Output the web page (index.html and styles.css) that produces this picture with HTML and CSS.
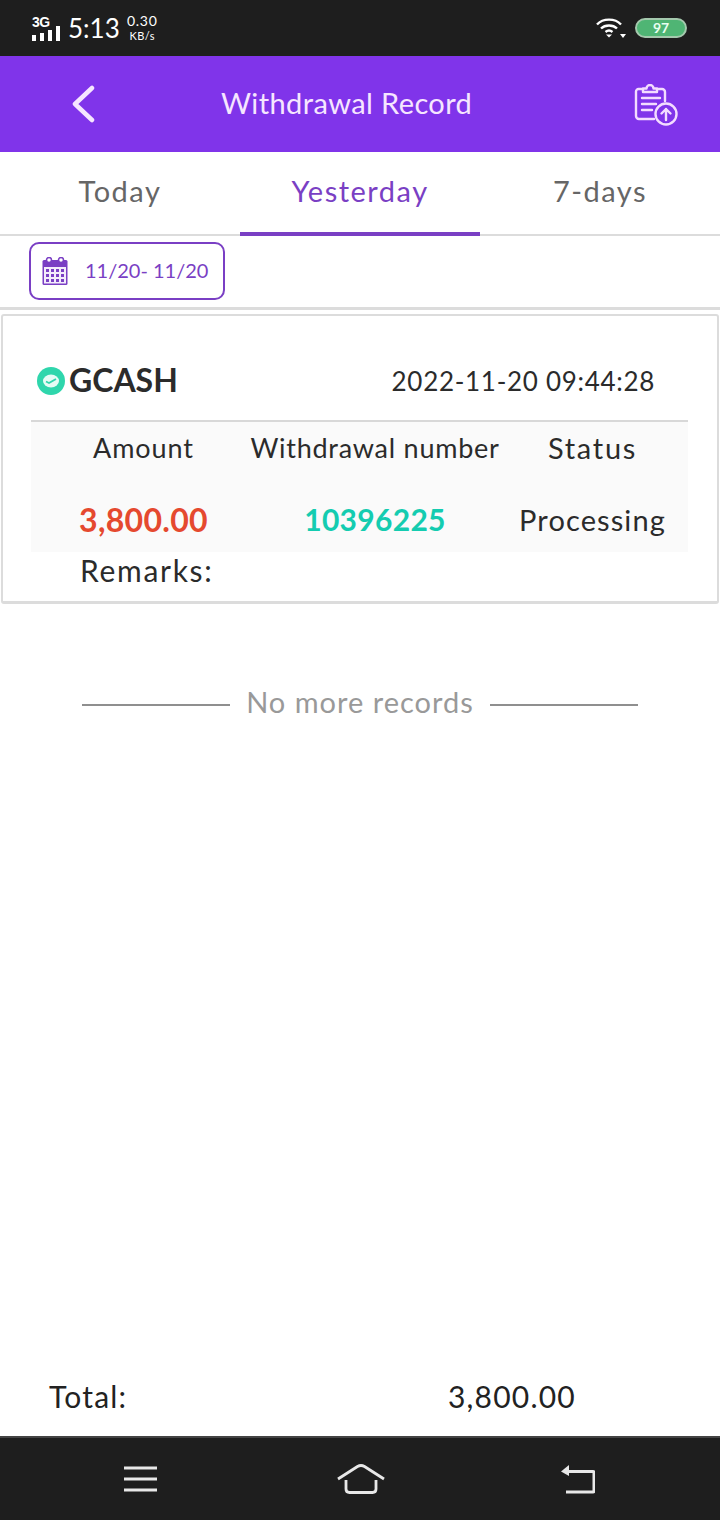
FILE: index.html
```html
<!DOCTYPE html>
<html>
<head>
    <meta charset="UTF-8">
    <meta name="viewport" content="width=device-width, initial-scale=1.0">
    <title>Withdrawal Record</title>
    <link rel="stylesheet" href="styles.css">
</head>
<body>
    <div class="page">
        <div class="status-bar">
            <div class="status-left">
                <div class="signal">
                    <span class="signal-label">3G</span>
                    <svg class="signal-bars" width="28" height="16" viewBox="0 0 28 16">
                        <rect x="0" y="10" width="4" height="6" fill="#fff"/>
                        <rect x="8" y="8" width="4" height="8" fill="#fff"/>
                        <rect x="16" y="5" width="4" height="11" fill="#fff"/>
                        <rect x="24" y="1" width="4" height="15" fill="#fff"/>
                    </svg>
                </div>
                <span class="clock">5:13</span>
                <div class="speed">
                    <span class="speed-value">0.30</span>
                    <span class="speed-unit">KB/s</span>
                </div>
            </div>
            <div class="status-right">
                <svg width="30" height="22" viewBox="0 0 30 22" fill="none" stroke="#fff" stroke-width="2.4">
                    <path d="M1 7.500C7 1 19 1 25 7.500"/>
                    <path d="M5 11.500C9 7.500 17 7.500 21 11.500"/>
                    <path d="M9.500 15C11.500 13.400 14.500 13.400 16.500 15"/>
                    <path d="M10 17.500h6l-3 3z" fill="#fff" stroke="none"/>
                    <path d="M24 17h6l-3 4z" fill="#fff" stroke="none"/>
                </svg>
                <div class="battery">97</div>
            </div>
        </div>

        <header class="app-header">
            <svg class="back-icon" width="24" height="38" viewBox="0 0 24 38" fill="none" stroke="#f6e6ff" stroke-width="4.5" stroke-linecap="round" stroke-linejoin="round">
                <path d="M21 3L4 19l17 16"/>
            </svg>
            <h1 class="app-title">Withdrawal Record</h1>
            <svg class="upload-icon" width="44" height="42" viewBox="0 0 44 42" fill="none" stroke="#f3dcff" stroke-width="2.4" stroke-linecap="round" stroke-linejoin="round">
                <path d="M8 5H4.500A2.500 2.500 0 0 0 2 7.500V32a3 3 0 0 0 3 3h15"/>
                <path d="M24 5h4a3 3 0 0 1 3 3v9"/>
                <path d="M9 8V4.500h3.500a3.500 3.500 0 0 1 7 0H23V8z"/>
                <path d="M8 14h18M8 20h14M8 26h10"/>
                <circle cx="32" cy="30" r="10.500"/>
                <path d="M32 36V25M27.500 29.500L32 25l4.500 4.500"/>
            </svg>
        </header>

        <nav class="tabs">
            <div class="tab">Today</div>
            <div class="tab tab-active">Yesterday</div>
            <div class="tab">7-days</div>
        </nav>

        <div class="date-row">
            <div class="date-button">
                <svg class="date-icon" width="26" height="28" viewBox="0 0 26 28">
                    <rect x="0.500" y="3" width="25" height="25" rx="1.500" fill="#7a3fc4"/>
                    <rect x="2" y="10" width="22" height="16.500" fill="#f3ecfb"/>
                    <circle cx="7" cy="3" r="2.500" fill="#fff" stroke="#7a3fc4" stroke-width="1.500"/>
                    <circle cx="19" cy="3" r="2.500" fill="#fff" stroke="#7a3fc4" stroke-width="1.500"/>
                    <g fill="#7a3fc4">
                        <rect x="4" y="12" width="3" height="3"/>
                        <rect x="9" y="12" width="3" height="3"/>
                        <rect x="14" y="12" width="3" height="3"/>
                        <rect x="19" y="12" width="3" height="3"/>
                        <rect x="4" y="17" width="3" height="3"/>
                        <rect x="9" y="17" width="3" height="3"/>
                        <rect x="14" y="17" width="3" height="3"/>
                        <rect x="19" y="17" width="3" height="3"/>
                        <rect x="4" y="22" width="3" height="3"/>
                        <rect x="9" y="22" width="3" height="3"/>
                        <rect x="14" y="22" width="3" height="3"/>
                        <rect x="19" y="22" width="3" height="3"/>
                    </g>
                </svg>
                <span class="date-text">11/20- 11/20</span>
            </div>
        </div>

        <main class="content">
            <section class="record-card">
                <div class="record-head">
                    <div class="record-brand">
                        <svg width="28" height="28" viewBox="0 0 28 28">
                            <circle cx="14" cy="14" r="14" fill="#2fd6ac"/>
                            <ellipse cx="14" cy="14" rx="8" ry="6.500" fill="#e6fbf5"/>
                            <path d="M9 14.500l3 1.500 7-4" fill="none" stroke="#2fd6ac" stroke-width="1.800"/>
                        </svg>
                        <span class="brand-name">GCASH</span>
                    </div>
                    <span class="record-time">2022-11-20 09:44:28</span>
                </div>
                <div class="record-table">
                    <div class="cell cell-amount">Amount</div>
                    <div class="cell cell-number">Withdrawal number</div>
                    <div class="cell cell-status">Status</div>
                    <div class="cell value value-amount">3,800.00</div>
                    <div class="cell value value-number">10396225</div>
                    <div class="cell value value-status">Processing</div>
                </div>
                <div class="record-remarks">Remarks:</div>
            </section>

            <div class="no-more">
                <span class="no-more-line"></span>
                <span class="no-more-text">No more records</span>
                <span class="no-more-line"></span>
            </div>
        </main>

        <div class="total-row">
            <span class="total-label">Total:</span>
            <span class="total-value">3,800.00</span>
        </div>

        <div class="nav-bar">
            <svg width="33" height="26" viewBox="0 0 33 26" stroke="#e8e8e8" stroke-width="3.200">
                <path d="M0 2h33M0 13h33M0 24h33"/>
            </svg>
            <svg class="nav-home" width="48" height="30" viewBox="0 0 48 30" fill="none" stroke="#e8e8e8" stroke-width="2.800" stroke-linejoin="round">
                <path d="M1 15L20.500 2.500q3.500-2 7 0L47 15"/>
                <path d="M9 16v9q0 3.500 3.500 3.500h23q3.500 0 3.500-3.500v-9"/>
            </svg>
            <svg width="34" height="29" viewBox="0 0 34 29" fill="none">
                <path d="M6 6.500h26a1 1 0 0 1 1 1V26a1 1 0 0 1-1 1H5" stroke="#e8e8e8" stroke-width="3"/>
                <path d="M0 6.500L8 0v11z" fill="#e8e8e8"/>
            </svg>
        </div>
    </div>
</body>
</html>
```

FILE: styles.css
```css
* {
    margin: 0;
    padding: 0;
    box-sizing: border-box;
}

body {
    background: #fff;
    font-family: Lato, "Open Sans", sans-serif;
    color: #2b2b2b;
}

.page {
    width: 720px;
    height: 1520px;
    display: flex;
    flex-direction: column;
    overflow: hidden;
}

.status-bar {
    height: 56px;
    flex-shrink: 0;
    background: #1e1e1e;
    color: #fff;
    display: flex;
    justify-content: space-between;
    align-items: center;
    padding: 0 33px 0 32px;
}

.status-left,
.status-right {
    display: flex;
    align-items: center;
}

.status-right {
    gap: 9px;
}

.signal {
    display: flex;
    flex-direction: column;
    width: 29px;
    height: 26px;
}

.signal-label {
    font-family: "Liberation Sans", sans-serif;
    font-size: 14px;
    line-height: 14px;
    font-weight: bold;
    letter-spacing: -0.5px;
    height: 10px;
}

.signal-bars {
    display: block;
}

.clock {
    font-size: 26px;
    line-height: 30px;
    margin-left: 7px;
    width: 51px;
    white-space: nowrap;
}

.speed {
    display: flex;
    flex-direction: column;
    align-items: center;
    margin-left: 8px;
    margin-bottom: 1px;
}

.speed-value {
    font-size: 14px;
    line-height: 16px;
    letter-spacing: 0.7px;
}

.speed-unit {
    font-size: 11px;
    line-height: 14px;
    letter-spacing: 0.4px;
}

.battery {
    width: 52px;
    height: 20px;
    border: 2px solid #a4c9ad;
    border-radius: 10px;
    background: #4fb574;
    color: #e8fff0;
    font-size: 14px;
    line-height: 16px;
    font-weight: bold;
    text-align: center;
}

.app-header {
    height: 96px;
    flex-shrink: 0;
    background: #8034ea;
    display: flex;
    align-items: center;
}

.back-icon {
    margin-left: 71px;
}

.app-title {
    font-size: 29px;
    font-weight: normal;
    color: #f6e6ff;
    letter-spacing: 0.4px;
    margin-left: 126px;
    margin-bottom: 4px;
    white-space: nowrap;
}

.upload-icon {
    margin-left: auto;
    margin-right: 42px;
    margin-top: 2px;
}

.tabs {
    height: 84px;
    flex-shrink: 0;
    display: flex;
    border-bottom: 2px solid #dcdcdc;
}

.tab {
    flex: 1;
    height: 84px;
    text-align: center;
    font-size: 29px;
    line-height: 78px;
    color: #666;
    letter-spacing: 1.5px;
}

.tab-active {
    color: #7a3fc4;
    border-bottom: 4px solid #7a3fc4;
}

.date-row {
    height: 74px;
    flex-shrink: 0;
    padding: 6px 0 0 29px;
    border-bottom: 3px solid #dcdcdc;
}

.date-button {
    width: 196px;
    height: 58px;
    border: 2px solid #7a3fc4;
    border-radius: 10px;
    display: flex;
    align-items: center;
    padding-left: 11px;
    gap: 17px;
    color: #7a3fc4;
    white-space: nowrap;
}

.date-icon {
    flex-shrink: 0;
}

.date-text {
    font-size: 20px;
    margin-bottom: 3px;
}

.content {
    flex: 1;
    padding-top: 4px;
}

.record-card {
    height: 290px;
    margin: 0 1px;
    border: 2px solid #dcdcdc;
    border-bottom-width: 3px;
    border-radius: 3px;
    padding: 0 29px 0 28px;
}

.record-head {
    height: 106px;
    display: flex;
    justify-content: space-between;
    align-items: center;
    padding: 25px 33px 0 6px;
    border-bottom: 2px solid #d8d8d8;
}

.record-brand {
    display: flex;
    align-items: center;
    gap: 4px;
}

.brand-name {
    font-size: 32px;
    font-weight: bold;
    color: #2b2b2b;
    margin-bottom: 3px;
}

.record-time {
    font-size: 26px;
    letter-spacing: 0.7px;
    white-space: nowrap;
}

.record-table {
    display: grid;
    grid-template-columns: 225px 238px 1fr;
    grid-template-rows: 52px 78px;
    background: #fafafa;
}

.cell {
    font-size: 27px;
    white-space: nowrap;
    display: flex;
    align-items: center;
    justify-content: center;
    letter-spacing: 0.9px;
    padding-bottom: 2px;
}

.cell-number {
    letter-spacing: 0.75px;
}

.cell-status {
    font-size: 29px;
    letter-spacing: 1.7px;
    padding-left: 3px;
}

.value {
    padding-top: 12px;
    padding-bottom: 0;
}

.value-amount {
    color: #e5492f;
    font-size: 32px;
    font-weight: bold;
    letter-spacing: 0.3px;
}

.value-number {
    color: #14ccb0;
    font-size: 30px;
    font-weight: bold;
    letter-spacing: 0.3px;
}

.value-status {
    font-size: 29px;
    letter-spacing: 1.1px;
    padding-left: 3px;
}

.record-remarks {
    margin-left: 49px;
    font-size: 30px;
    line-height: 36px;
    letter-spacing: 1.7px;
}

.no-more {
    margin-top: 80px;
    display: flex;
    align-items: center;
    justify-content: center;
    gap: 16px;
}

.no-more-line {
    width: 148px;
    height: 2px;
    background: #8f8f8f;
}

.no-more-text {
    color: #999;
    font-size: 29px;
    letter-spacing: 1px;
    margin-bottom: 6px;
}

.total-row {
    height: 76px;
    flex-shrink: 0;
    display: flex;
    align-items: flex-start;
    padding: 14px 0 0 49px;
    font-size: 30px;
    line-height: 44px;
    color: #222;
    letter-spacing: 1.2px;
}

.total-label {
    width: 399px;
}

.nav-bar {
    height: 84px;
    flex-shrink: 0;
    background: #1e1e1e;
    border-top: 2px solid #444;
    display: flex;
    align-items: center;
    padding-left: 124px;
}

.nav-home {
    margin-left: 180px;
    margin-right: 176px;
}
```
